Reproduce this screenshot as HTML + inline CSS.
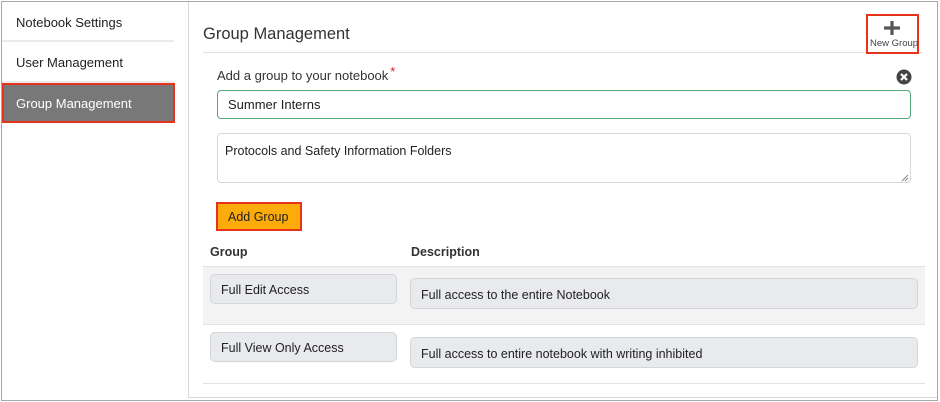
<!DOCTYPE html>
<html><head><style>
*{box-sizing:border-box;margin:0;padding:0}
body{width:940px;height:402px;background:#fff;font-family:"Liberation Sans",Arial,sans-serif;color:#222;position:relative;overflow:hidden}
.a{position:absolute}
.outer{left:1px;top:1px;width:937px;height:400px;border:1px solid #a8a8a8}
.item{left:2px;width:172px;height:40px;font-size:13px;padding:13px 0 0 14px;border-bottom:2px solid #ebebeb}
.panel{left:188px;top:2px;width:749px;height:396px;border-left:1px solid #d8d8d8;border-bottom:1px solid #d8d8d8}
.box{background:#e9eaed;border:1px solid #d3d5d9;border-radius:5px;font-size:12.5px;padding:8px 10px 0}
</style></head><body>
<div class="a outer"></div>
<div class="a item" style="top:2px">Notebook Settings</div>
<div class="a item" style="top:42px;height:41px">User Management</div>
<div class="a" style="left:2px;top:83px;width:173px;height:40px;background:#787878;border:2px solid #e8331c;color:#fff;font-size:13px;padding:11px 0 0 12px">Group Management</div>
<div class="a panel"></div>
<div class="a" style="left:203px;top:25px;font-size:16.5px;color:#333">Group Management</div>
<div class="a" style="left:203px;top:52px;width:720px;height:1px;background:#e0e0e0"></div>
<div class="a" style="left:866px;top:14px;width:53px;height:40px;border:2px solid #e8331c"></div>
<svg class="a" style="left:883px;top:20px" width="18" height="16"><path d="M9 1V15M1 8H17" stroke="#555" stroke-width="3.2"/></svg>
<div class="a" style="left:870px;top:38px;font-size:9.5px;color:#444">New Group</div>
<div class="a" style="left:217px;top:68px;font-size:13px;color:#333">Add a group to your notebook<span style="color:#e02020;position:relative;top:-4px;left:2px">*</span></div>
<svg class="a" style="left:896px;top:69px" width="16" height="16"><circle cx="8" cy="8" r="7.5" fill="#444"/><path d="M5 5L11 11M11 5L5 11" stroke="#fff" stroke-width="2.2"/></svg>
<div class="a" style="left:217px;top:90px;width:694px;height:29px;border:1px solid #55a87a;border-radius:4px;font-size:13px;padding:6px 0 0 10px">Summer Interns</div>
<div class="a" style="left:217px;top:133px;width:694px;height:50px;border:1px solid #d6d8db;border-radius:4px;font-size:12.5px;padding:10px 0 0 7px">Protocols and Safety Information Folders</div>
<svg class="a" style="left:901px;top:174px" width="8" height="8"><path d="M7 1L1 7M7 4L4 7" stroke="#888"/></svg>
<div class="a" style="left:216px;top:202px;width:86px;height:29px;background:#fbac0a;border:2px solid #e8331c;font-size:12.5px;padding:6px 0 0 10px;color:#222">Add Group</div>
<div class="a" style="left:210px;top:245px;font-size:12.5px;font-weight:bold;color:#333">Group</div>
<div class="a" style="left:411px;top:245px;font-size:12.5px;font-weight:bold;color:#333">Description</div>
<div class="a" style="left:203px;top:266px;width:722px;height:59px;background:#f3f3f3;border-top:1px solid #e2e2e2;border-bottom:1px solid #e2e2e2"></div>
<div class="a" style="left:203px;top:383px;width:722px;height:1px;background:#e2e2e2"></div>
<div class="a box" style="left:210px;top:274px;width:187px;height:30px">Full Edit Access</div>
<div class="a box" style="left:410px;top:278px;width:508px;height:31px;padding-top:9px">Full access to the entire Notebook</div>
<div class="a box" style="left:210px;top:332px;width:187px;height:30px">Full View Only Access</div>
<div class="a box" style="left:410px;top:337px;width:508px;height:31px;padding-top:9px">Full access to entire notebook with writing inhibited</div>
</body></html>
